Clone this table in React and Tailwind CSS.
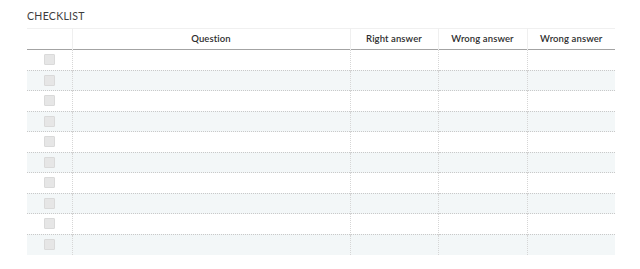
const COLS = ["Question", "Right answer", "Wrong answer", "Wrong answer"];
const ROWS = Array.from({ length: 10 }, (_, i) => i);

export default function App() {
  return (
    <div className="min-h-screen bg-white pt-[10px] pl-[27px] font-['Lato',sans-serif]">
      <h2 className="text-[10.5px] leading-[12px] text-[#3d3d3d] tracking-[0.3px]">CHECKLIST</h2>
      <table className="mt-[6px] w-[588px] border-collapse table-fixed">
        <colgroup>
          <col className="w-[45px]" />
          <col className="w-[278px]" />
          <col className="w-[88px]" />
          <col className="w-[89px]" />
          <col className="w-[88px]" />
        </colgroup>
        <thead>
          <tr className="h-[21px] border-t border-[#f0f0f0] border-b-[1.5px] border-b-[#a3a3a3]">
            <th className="border-r border-[#efefef]" />
            {COLS.map((c, i) => (
              <th
                key={i}
                className={`text-[9.5px] font-semibold text-[#2e2e2e] text-center tracking-[0.1px] ${i < 3 ? "border-r border-[#efefef]" : ""}`}
              >
                {c}
              </th>
            ))}
          </tr>
        </thead>
        <tbody>
          {ROWS.map((r) => (
            <tr
              key={r}
              className={`h-[20.5px] ${r % 2 ? "bg-[#f3f7f8]" : "bg-white"} ${r < 9 ? "border-b border-dotted border-[#c9c9c9]" : ""}`}
            >
              <td className="border-r border-dotted border-[#d6d6d6]">
                <div className="mx-auto w-[11px] h-[11px] bg-[#e6e6e6] border border-[#dadada] rounded-[1px]" />
              </td>
              <td className="border-r border-dotted border-[#d6d6d6]" />
              <td className="border-r border-dotted border-[#d6d6d6]" />
              <td className="border-r border-dotted border-[#d6d6d6]" />
              <td />
            </tr>
          ))}
        </tbody>
      </table>
    </div>
  );
}
